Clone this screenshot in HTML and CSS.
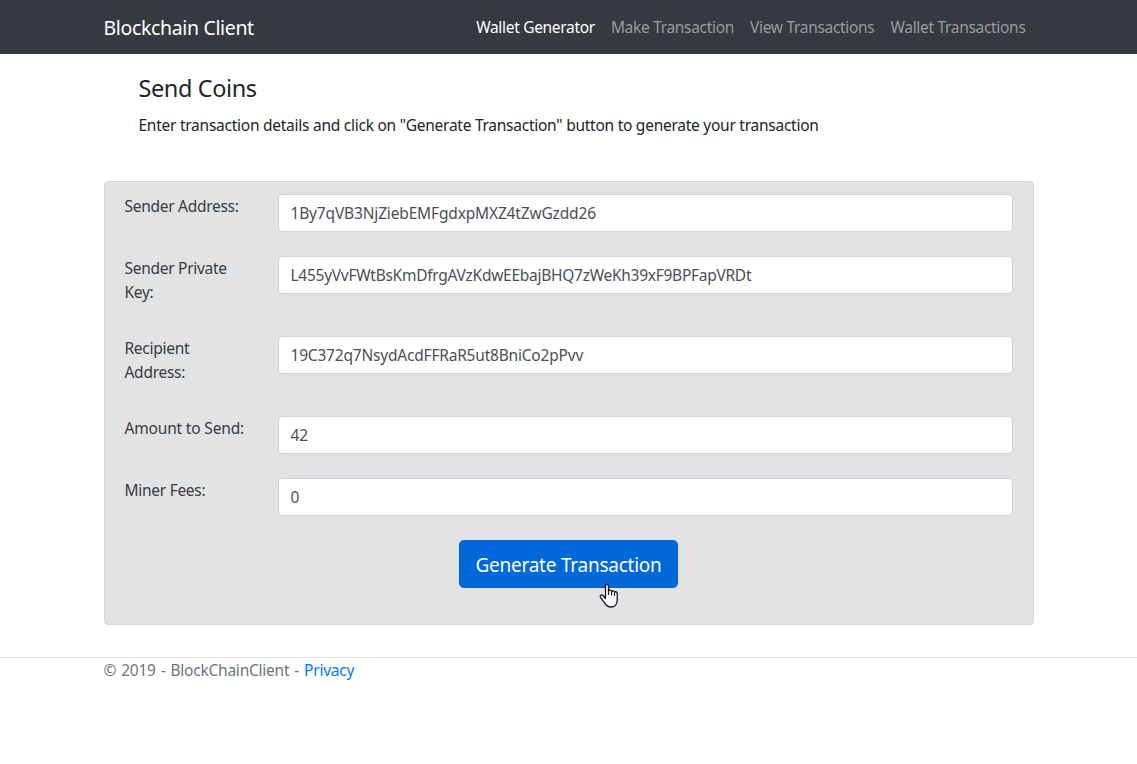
FILE: index.html
```html
<!DOCTYPE html>
<html lang="en">
<head>
<meta charset="utf-8">
<title>Blockchain Client</title>
<link rel="stylesheet" href="styles.css">
</head>
<body>
<header class="navbar">
  <div class="container navbar-inner">
    <a class="brand"><span class="brand-text">Blockchain Client</span></a>
    <nav class="nav">
      <a class="nav-link active">Wallet Generator</a>
      <a class="nav-link">Make Transaction</a>
      <a class="nav-link">View Transactions</a>
      <a class="nav-link">Wallet Transactions</a>
    </nav>
  </div>
</header>
<main class="container">
  <section class="intro">
    <h4 class="title">Send Coins</h4>
    <p class="lead">Enter transaction details and click on "Generate Transaction" button to generate your transaction</p>
  </section>
  <form class="panel">
    <div class="row"><label class="label">Sender Address:</label><div class="control addr">1By7qVB3NjZiebEMFgdxpMXZ4tZwGzdd26</div></div>
    <div class="row"><label class="label">Sender Private<br>Key:</label><div class="control key">L455yVvFWtBsKmDfrgAVzKdwEEbajBHQ7zWeKh39xF9BPFapVRDt</div></div>
    <div class="row"><label class="label">Recipient<br>Address:</label><div class="control recipient">19C372q7NsydAcdFFRaR5ut8BniCo2pPvv</div></div>
    <div class="row"><label class="label amount">Amount to Send:</label><div class="control">42</div></div>
    <div class="row"><label class="label">Miner Fees:</label><div class="control">0</div></div>
    <div class="actions">
      <button class="btn" type="button">Generate Transaction</button>
      <svg class="pointer" width="20" height="26" viewBox="0 0 20 26"><path d="M6.5 15.500V3.2C6.5 .8 9.500 .8 9.500 3.2V8C10 6.500 12.500 6.700 12.600 8.600C13.300 7.300 15.400 7.600 15.500 9.300C16.500 8.300 18.200 8.800 18.200 10.600V17C18.200 21 15.800 24 12 24C8.600 24 7 22.500 5.400 19.600L1.600 14.600C.5 12.600 2.300 11.300 4 12.600Z" fill="#fff" stroke="#15152a" stroke-width="1.300" stroke-linejoin="round"/><path d="M9.500 7V12M12.500 8.500V12.500M15.500 9.500V13" fill="none" stroke="#15152a" stroke-width="1.200"/></svg>
    </div>
  </form>
</main>
<footer class="footer">
  <div class="container"><span class="copy">© 2019 - BlockChainClient - <a class="link">Privacy</a></span></div>
</footer>
</body>
</html>
```

FILE: styles.css
```css
* { box-sizing: border-box; }
body {
  margin: 0;
  background: #fff;
  color: #212529;
  font: 400 15.5px/24px "Noto Sans", "Open Sans", sans-serif;
}
.container { width: 960px; margin: 0 auto; padding: 0 15px; }
.navbar { height: 54px; background: #343a40; }
.navbar-inner { height: 100%; display: flex; align-items: center; justify-content: space-between; }
.brand { padding-top: 2px; color: #fff; font-size: 19.5px; line-height: 30px; letter-spacing: -0.35px; }
.nav { display: flex; letter-spacing: -0.31px; }
.nav-link { padding: 8px; color: #999c9f; white-space: nowrap; }
.nav-link.active { color: #fff; }
.intro { padding: 20px 35px 0; height: 127px; }
.title { margin: 0 0 10px; font-size: 23.5px; font-weight: 400; line-height: 29px; letter-spacing: -0.4px; }
.lead { margin: 0; white-space: nowrap; letter-spacing: -0.255px; }
.panel {
  height: 444px;
  padding: 12px 20px;
  background: #e2e3e5;
  border: 1px solid #d6d8db;
  border-radius: 4px;
  color: #383d41;
}
.row { display: grid; grid-template-columns: 153px 1fr; align-items: start; margin-bottom: 24px; }
.label { margin-bottom: 8px; white-space: nowrap; letter-spacing: -0.28px; }
.label.amount { letter-spacing: -0.17px; }
.control {
  height: 38px;
  padding: 6px 12px;
  background: #fff;
  border: 1px solid #ced4da;
  border-radius: 4px;
  color: #495057;
}
.addr { letter-spacing: -0.16px; }
.key { letter-spacing: -0.27px; }
.recipient { letter-spacing: -0.2px; }
.actions { position: relative; display: flex; justify-content: center; }
.btn {
  width: 219px;
  height: 48px;
  padding: 2px 0 0;
  border: 1px solid #0062cc;
  border-radius: 4.8px;
  background: #0069d9;
  color: #fff;
  font: 400 19px/30px "Noto Sans", "Open Sans", sans-serif;
  letter-spacing: -0.24px;
}
.pointer { position: absolute; left: 474px; top: 43px; }
.footer { margin-top: 32px; border-top: 1px solid #dee2e6; color: #6c757d; }
.copy { letter-spacing: -0.23px; word-spacing: 1.2px; }
.link { color: #007bff; }
```
